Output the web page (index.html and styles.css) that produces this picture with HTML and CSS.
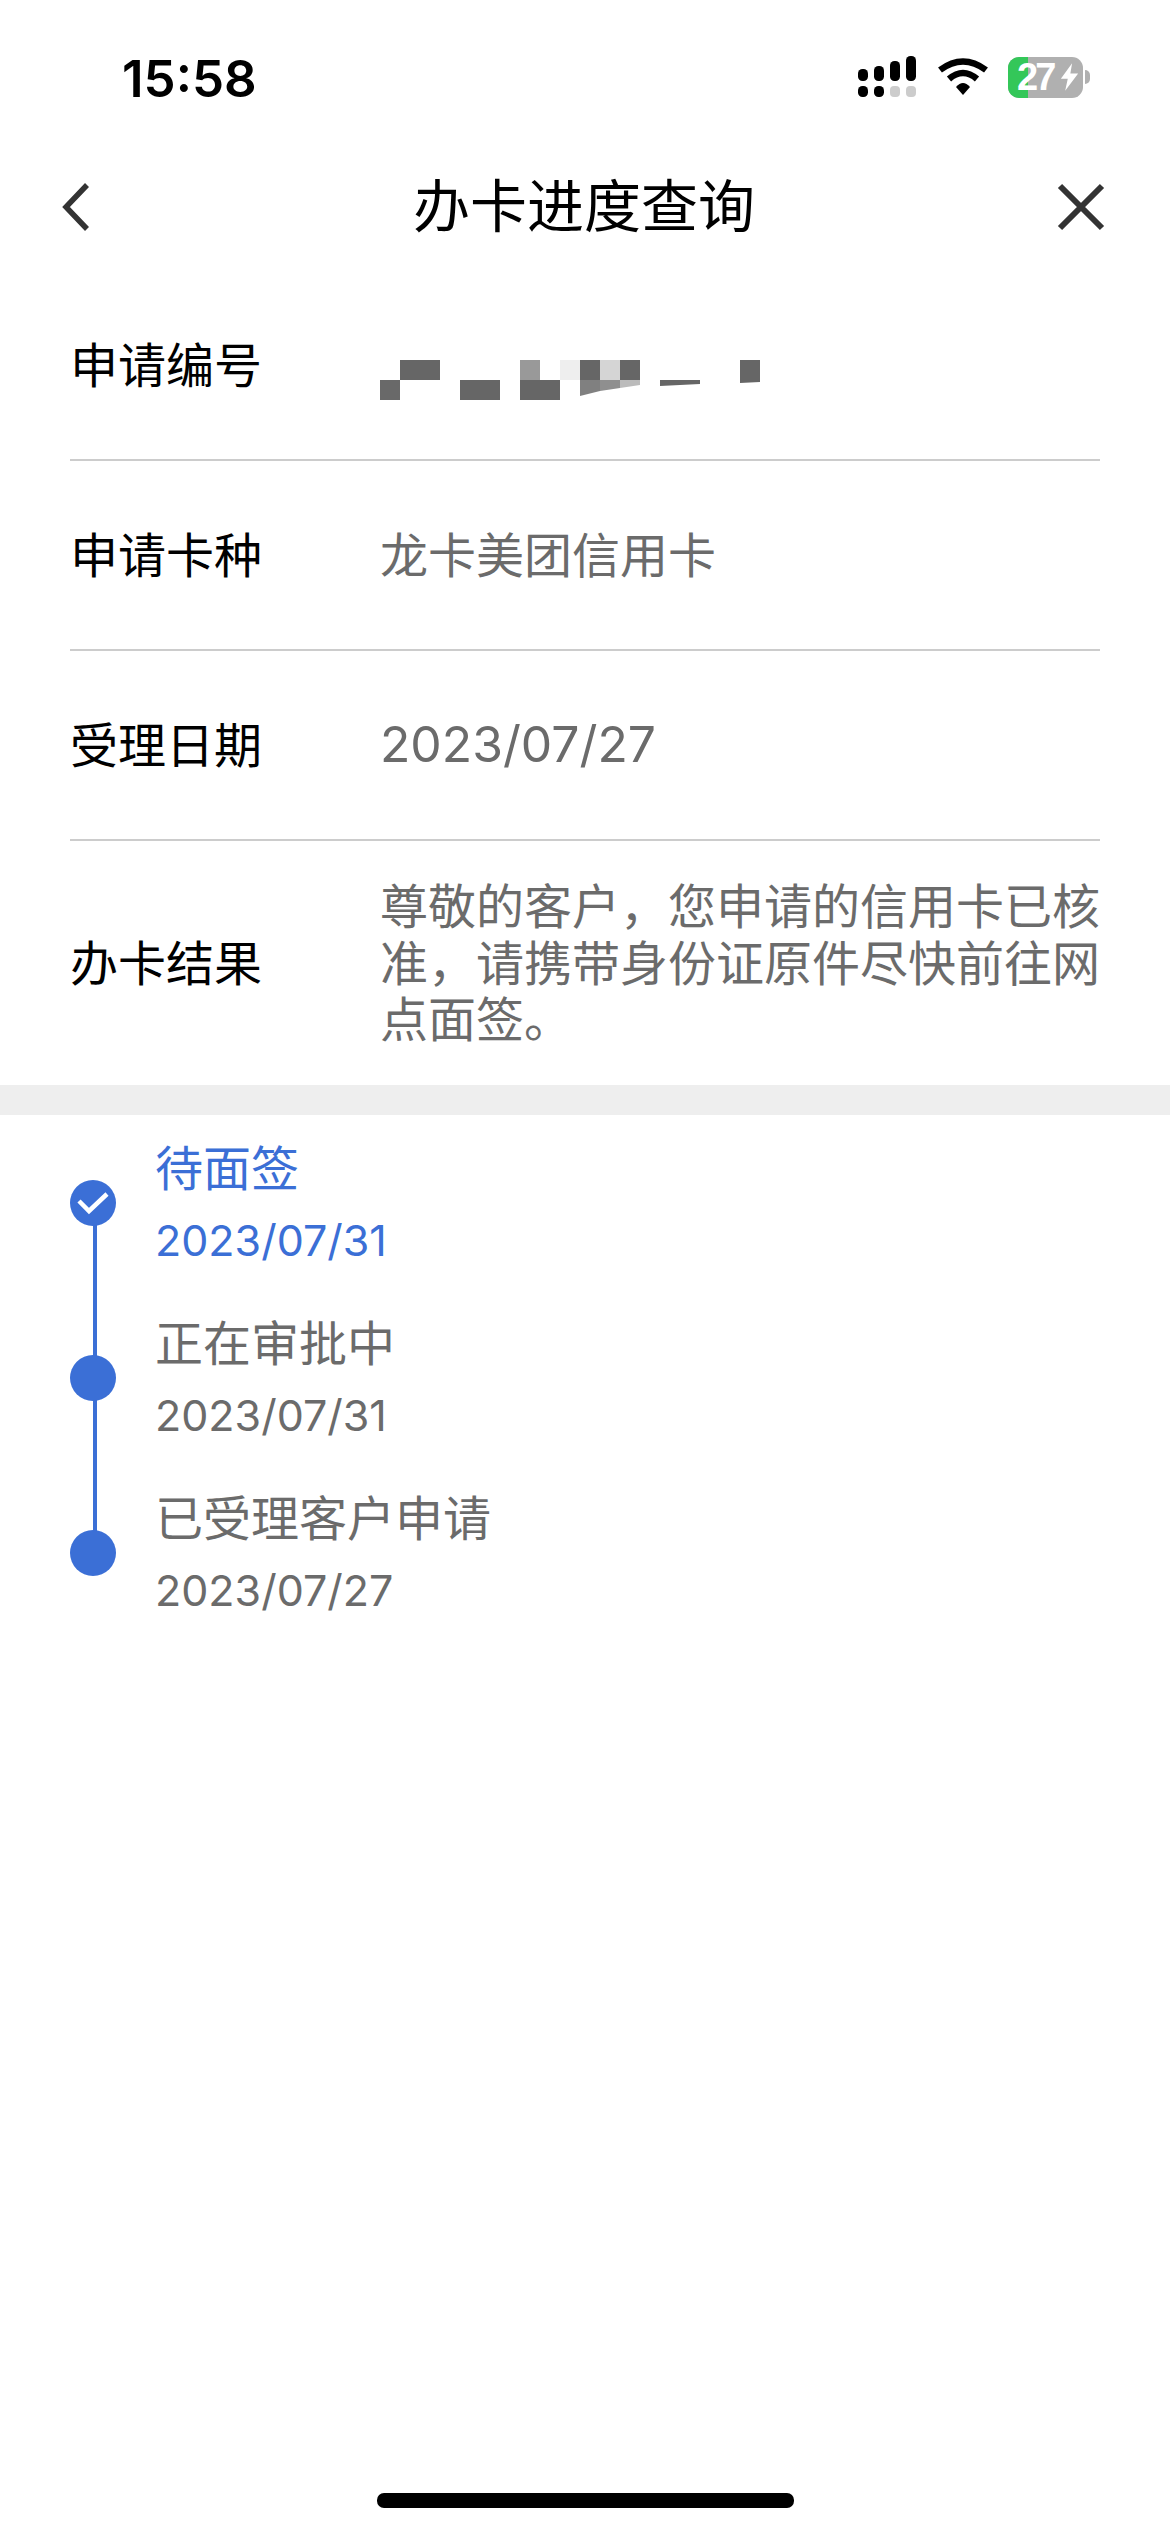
FILE: index.html
```html
<!DOCTYPE html>
<html lang="zh-CN">
<head>
    <meta charset="UTF-8">
    <meta name="viewport" content="width=device-width, initial-scale=1.0">
    <title>办卡进度查询</title>
    <link rel="stylesheet" href="styles.css">
</head>
<body>
    <div class="status-bar">
        <span class="time">15:58</span>
        <div class="status-icons">
            <svg class="signal" width="60" height="42" viewBox="0 0 60 42">
                <rect x="0" y="13" width="10" height="12" rx="4.5" fill="#000"/>
                <rect x="16" y="10" width="10" height="15" rx="4.5" fill="#000"/>
                <rect x="32" y="5" width="10" height="20" rx="4.5" fill="#000"/>
                <rect x="48" y="0" width="10" height="25" rx="4.5" fill="#000"/>
                <rect x="0" y="30" width="10" height="11" rx="4.5" fill="#000"/>
                <rect x="16" y="30" width="10" height="11" rx="4.5" fill="#000"/>
                <rect x="32" y="30" width="10" height="11" rx="4" fill="#ccc"/>
                <rect x="48" y="30" width="10" height="11" rx="4" fill="#ccc"/>
            </svg>
            <svg class="wifi" width="50" height="38" viewBox="0 0 50 38">
                <path d="M2 12 Q25 -5 48 12" fill="none" stroke="#000" stroke-width="6.5"/>
                <path d="M11 21 Q25 9 39 21" fill="none" stroke="#000" stroke-width="6.5"/>
                <path d="M18 29 Q25 21 32 29 L25 37 Z" fill="#000"/>
            </svg>
            <div class="battery">
                <div class="battery-body">
                    <div class="battery-fill"></div>
                    <span class="battery-text">27</span>
                    <svg class="bolt" width="19" height="32" viewBox="0 0 22 32">
                        <path d="M14 0 L1 18 H9 L6 32 L21 12 H12 Z" fill="#fff"/>
                    </svg>
                </div>
                <div class="battery-nub"></div>
            </div>
        </div>
    </div>

    <div class="nav">
        <svg class="nav-icon" width="48" height="48" viewBox="0 0 48 48">
            <path d="M36 2 L15 24 L36 46" fill="none" stroke="#333" stroke-width="5.5"/>
        </svg>
        <div class="nav-title">办卡进度查询</div>
        <svg class="nav-icon" width="48" height="48" viewBox="0 0 48 48">
            <path d="M3 3 L45 45 M45 3 L3 45" fill="none" stroke="#333" stroke-width="6"/>
        </svg>
    </div>

    <div class="info">
        <div class="info-row">
            <div class="info-label">申请编号</div>
            <svg class="mosaic" width="380" height="40" viewBox="0 0 380 40">
                <rect x="20" y="0" width="40" height="20" fill="#666"/>
                <rect x="0" y="20" width="20" height="20" fill="#696969"/>
                <rect x="80" y="20" width="40" height="20" fill="#666"/>
                <rect x="140" y="0" width="20" height="20" fill="#999"/>
                <rect x="140" y="20" width="40" height="20" fill="#666"/>
                <rect x="180" y="0" width="20" height="20" fill="#eee"/>
                <rect x="200" y="0" width="20" height="20" fill="#666"/>
                <rect x="220" y="0" width="20" height="20" fill="#d5d5d5"/>
                <rect x="240" y="0" width="20" height="20" fill="#666"/>
                <polygon points="200,20 220,20 220,31 200,36" fill="#808080"/>
                <polygon points="220,20 240,20 240,28 220,31" fill="#8f8f8f"/>
                <polygon points="240,20 260,20 260,25 240,28" fill="#bbb"/>
                <polygon points="280,20 320,20 320,24 280,26" fill="#666"/>
                <polygon points="360,0 380,0 380,22 360,23" fill="#666"/>
            </svg>
        </div>
        <div class="info-row">
            <div class="info-label">申请卡种</div>
            <div class="info-value">龙卡美团信用卡</div>
        </div>
        <div class="info-row">
            <div class="info-label">受理日期</div>
            <div class="info-date">2023/07/27</div>
        </div>
        <div class="info-row info-row-last">
            <div class="info-label">办卡结果</div>
            <div class="info-value">尊敬的客户，您申请的信用卡已核准，请携带身份证原件尽快前往网点面签。</div>
        </div>
    </div>

    <div class="band"></div>

    <div class="timeline">
        <div class="step step-active">
            <div class="dot">
                <svg width="32" height="24" viewBox="0 0 32 24">
                    <path d="M2 10 L12 20 L30 3" fill="none" stroke="#fff" stroke-width="4.5"/>
                </svg>
            </div>
            <div class="step-text">
                <div class="step-title">待面签</div>
                <div class="step-date">2023/07/31</div>
            </div>
        </div>
        <div class="step">
            <div class="dot"></div>
            <div class="step-text">
                <div class="step-title">正在审批中</div>
                <div class="step-date">2023/07/31</div>
            </div>
        </div>
        <div class="step">
            <div class="dot"></div>
            <div class="step-text">
                <div class="step-title">已受理客户申请</div>
                <div class="step-date">2023/07/27</div>
            </div>
        </div>
    </div>

    <div class="home-bar"></div>
</body>
</html>
```

FILE: styles.css
```css
* {
    margin: 0;
    padding: 0;
    box-sizing: border-box;
}

body {
    display: flex;
    flex-direction: column;
    height: 2532px;
    overflow: hidden;
    background: #fff;
    font-family: "Noto Sans CJK SC", sans-serif;
    color: #000;
}

.status-bar {
    display: flex;
    justify-content: space-between;
    align-items: center;
    height: 146px;
    padding: 8px 80px 0 122px;
}

.time {
    margin-top: 3px;
    font-family: Inter, sans-serif;
    font-size: 51px;
    font-weight: 600;
}

.status-icons {
    display: flex;
    align-items: center;
    gap: 20px;
}

.battery {
    display: flex;
    align-items: center;
    gap: 2px;
}

.battery-body {
    position: relative;
    display: flex;
    align-items: center;
    width: 75px;
    height: 41px;
    background: #b0b0b0;
    border-radius: 11px;
}

.battery-fill {
    position: absolute;
    left: 0;
    top: 0;
    bottom: 0;
    width: 20px;
    background: #34c759;
    border-radius: 11px 0 0 11px;
}

.battery-text {
    position: relative;
    margin-left: 9px;
    font-family: "Liberation Sans", sans-serif;
    font-size: 38px;
    font-weight: 700;
    line-height: 41px;
    letter-spacing: -3px;
    color: #fff;
}

.bolt {
    position: relative;
    flex: none;
    margin-left: 7px;
}

.battery-nub {
    width: 5px;
    height: 14px;
    background: #b0b0b0;
    border-radius: 0 7px 7px 0;
}

.nav {
    display: flex;
    justify-content: space-between;
    align-items: center;
    height: 125px;
    padding: 0 65px 3px 51px;
}

.nav-title {
    margin: 0 0 10px 12px;
    font-size: 57px;
    line-height: 70px;
}

.info {
    padding: 0 70px;
}

.info-row {
    display: flex;
    align-items: center;
    height: 190px;
    padding-bottom: 6px;
    border-bottom: 2px solid #ccc;
}

.info-row-last {
    height: 244px;
    border-bottom: none;
}

.info-label {
    flex: none;
    width: 310px;
    font-size: 48px;
}

.info-value {
    font-size: 48px;
    line-height: 56.5px;
    color: #6b6b6b;
}

.info-date {
    margin-top: 3px;
    font-family: Inter, sans-serif;
    font-size: 49.8px;
    color: #6b6b6b;
}

.mosaic {
    margin-top: 36px;
}

.band {
    height: 30px;
    background: #eee;
}

.timeline {
    padding: 17px 70px 0;
}

.step {
    position: relative;
    display: flex;
    height: 175px;
}

/* connector between the dots, runs from this dot to the next one */
.step:not(:last-child)::before {
    content: "";
    position: absolute;
    left: 23px;
    top: 71px;
    width: 4px;
    height: 175px;
    background: #3b6fd6;
}

.dot {
    position: relative;
    display: flex;
    justify-content: center;
    align-items: center;
    flex: none;
    width: 46px;
    height: 46px;
    margin-top: 48px;
    border-radius: 50%;
    background: #3b6fd6;
}

.step-text {
    margin-left: 39px;
    color: #6b6b6b;
}

.step-active .step-text {
    color: #3b6fd6;
}

.step-title {
    font-size: 48px;
    line-height: 66px;
}

.step-date {
    font-family: Inter, sans-serif;
    font-size: 43px;
    line-height: 84px;
}

.home-bar {
    align-self: center;
    width: 417px;
    height: 15px;
    margin-top: auto;
    margin-bottom: 24px;
    border-radius: 7px;
    background: #000;
}
```
